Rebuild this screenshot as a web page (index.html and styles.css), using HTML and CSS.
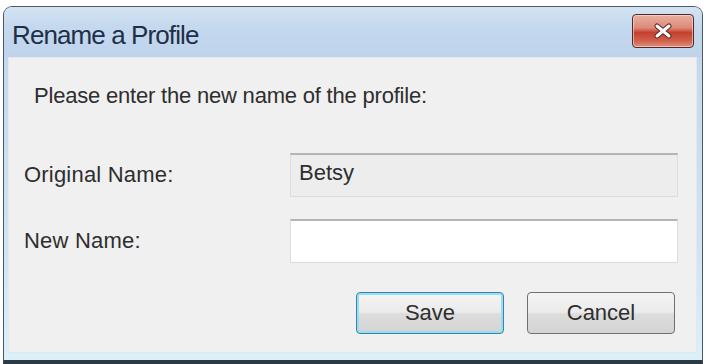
FILE: index.html
```
<!DOCTYPE html>
<html lang="en">
<head>
  <meta charset="UTF-8">
  <title>Rename a Profile</title>
  <link rel="stylesheet" href="styles.css">
</head>
<body>

  <div class="window">
    <!-- Title bar -->
    <div class="titlebar">
      <span class="title">Rename a Profile</span>
      <button type="button" class="close-btn" aria-label="Close">
        <svg width="20" height="16" viewBox="0 0 20 16">
          <path d="M4 3 L16 13 M16 3 L4 13" stroke="#5a2a24" stroke-width="5" stroke-linecap="round" />
          <path d="M4 3 L16 13 M16 3 L4 13" stroke="#ffffff" stroke-width="3" stroke-linecap="round" />
        </svg>
      </button>
    </div>

    <!-- Dialog body -->
    <div class="client">
      <p class="prompt">Please enter the new name of the profile:</p>

      <div class="row">
        <label class="row-label">Original Name:</label>
        <div class="field field-readonly">Betsy</div>
      </div>

      <div class="row">
        <label class="row-label" for="new-name">New Name:</label>
        <input type="text" id="new-name" class="field">
      </div>

      <div class="actions">
        <button type="button" class="btn btn-default">Save</button>
        <button type="button" class="btn">Cancel</button>
      </div>
    </div>
  </div>

</body>
</html>
```

FILE: styles.css
```
body {
  margin: 0;
  padding: 0;
  background-color: #fff;
  font-family: "Liberation Sans", Arial, sans-serif;
  color: #2e2e2e;
}

.window {
  margin: 6px 3px 0 3px;
  width: 698px;
  height: 353px;
  border: 1px solid #4a5868;
  border-bottom: 4px solid #2c3a48;
  border-radius: 9px 9px 0 0;
  background: linear-gradient(to bottom, #bcd2ea 0%, #c6daee 20%, #d2e4f4 70%, #dcf0fa 100%);
  display: flex;
  flex-direction: column;
}

.titlebar {
  height: 50px;
  display: flex;
  align-items: center;
  justify-content: space-between;
  padding: 0 8px 0 8px;
  border-radius: 8px 8px 0 0;
  background: linear-gradient(to bottom, #d4e3f3 0%, #c4d8ee 40%, #bfd4eb 100%);
}

.title {
  font-size: 26px;
  color: #1f2f48;
  letter-spacing: -0.9px;
  margin-top: 6px;
}

.close-btn {
  width: 62px;
  height: 34px;
  margin-top: -2px;
  border: 1px solid #4c2c2c;
  border-radius: 4px;
  background: linear-gradient(to bottom, #eab0a0 0%, #dc8a78 40%, #c4402c 55%, #d0604c 80%, #e0907c 100%);
  box-shadow: inset 0 0 0 1px rgba(255, 220, 210, 0.6);
  display: flex;
  align-items: center;
  justify-content: center;
  padding: 0;
}

.client {
  flex: 1;
  margin: 0 5px 7px 4px;
  background-color: #f0f0f0;
  border: 1px solid #e2e8ee;
  padding: 0 18px 0 15px;
}

.prompt {
  margin: 25px 0 0 10px;
  font-size: 22px;
  letter-spacing: -0.2px;
  line-height: 26px;
}

.row {
  display: flex;
  align-items: center;
  margin-top: 22px;
}

.row:first-of-type {
  margin-top: 44px;
}

.row-label {
  width: 266px;
  font-size: 22px;
  letter-spacing: 0.2px;
}

.field {
  box-sizing: border-box;
  width: 388px;
  height: 44px;
  margin: 0;
  border: 1px solid #dcdcdc;
  border-top: 2px solid #b4b4b4;
  font-family: inherit;
  font-size: 22px;
}

.field-readonly {
  background-color: #ededed;
  padding: 5px 0 0 8px;
  color: #2e2e2e;
}

input.field {
  background-color: #fff;
  padding: 0 8px;
  outline: none;
}

.actions {
  display: flex;
  justify-content: flex-end;
  gap: 23px;
  margin-top: 29px;
  padding-right: 3px;
}

.btn {
  width: 148px;
  height: 42px;
  border: 1px solid #707070;
  border-radius: 4px;
  background: linear-gradient(to bottom, #f4f4f4 0%, #ebebeb 48%, #dddddd 52%, #d4d4d4 100%);
  font-family: inherit;
  font-size: 22px;
  color: #2e2e2e;
  cursor: pointer;
}

.btn-default {
  border-color: #2f86ae;
  box-shadow: inset 0 0 0 2px #9cdcf0;
}
```
